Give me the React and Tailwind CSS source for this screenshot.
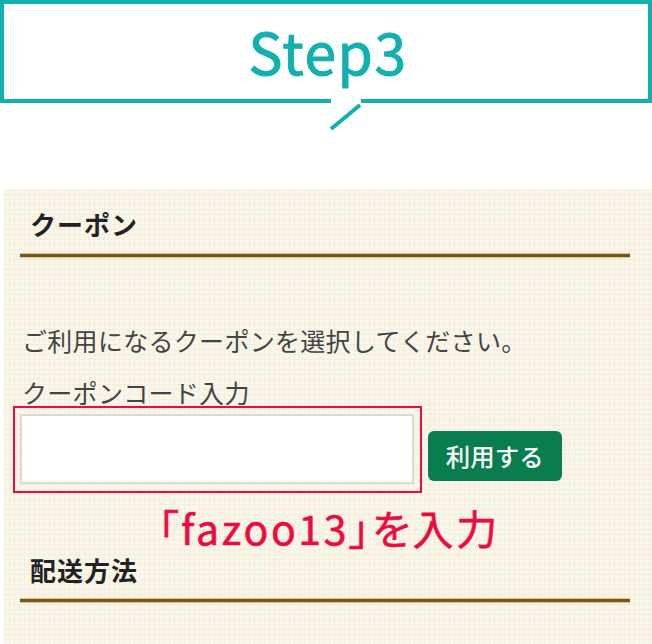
import React from 'react';

const jp = { fontFamily: '"Noto Sans CJK JP", "Noto Sans", sans-serif' };

const Rule = () => (
    <div className="ml-[7px] h-[3px] w-[610px] bg-[#77551b] shadow-[0_1px_1px_#d6c39a,0_-1px_1px_#d6c39a]" />
);

const App = () => {
    return (
        <div className="relative h-[644px] w-[652px] overflow-hidden bg-white" style={jp}>
            {/* step bubble */}
            <div className="relative flex h-[103px] items-center justify-center border-4 border-[#12b0ae]">
                <span className="ml-[4px] mt-[-2px] text-[57px] font-normal leading-none tracking-[1.5px] text-[#12b0ae] [-webkit-text-stroke:1px_#12b0ae]">
                    Step3
                </span>
                <svg
                    className="absolute left-[318px] top-[95px]"
                    width="44"
                    height="36"
                    viewBox="0 0 44 36"
                >
                    <rect x="9" y="0" width="30" height="8" fill="#fff" />
                    <line x1="38" y1="6" x2="9" y2="30" stroke="#12b0ae" strokeWidth="4" />
                </svg>
            </div>

            {/* coupon panel */}
            <div className="ml-[4px] mt-[86px] h-[455px] bg-[#faf6eb] bg-[linear-gradient(#f4eedd_1px,transparent_1px),linear-gradient(90deg,#f4eedd_1px,transparent_1px)] bg-[size:5px_5px] pl-[9px] pt-[20px]">
                <h2 className="ml-[17px] text-[26px] font-bold leading-[30px] tracking-[1px] text-[#222]">クーポン</h2>
                <div className="mt-[15px]">
                    <Rule />
                </div>

                <p className="ml-[9px] mt-[68px] text-[25px] leading-[30px] tracking-[0.3px] text-[#444]">
                    ご利用になるクーポンを選択してください。
                </p>
                <p className="ml-[9px] mt-[23px] text-[25px] leading-[28px] tracking-[0.3px] text-[#444]">
                    クーポンコード入力
                </p>

                <div className="flex items-start">
                    <div className="h-[87px] w-[409px] border-2 border-[#ec0b3f] pl-[5px] pt-[6px]">
                        <input
                            type="text"
                            className="h-[70px] w-[394px] border-2 border-[#dcdad3] bg-white outline-none"
                        />
                    </div>
                    <button className="ml-[6px] mt-[25px] flex h-[50px] w-[134px] items-center justify-center rounded-[6px] bg-[#0a7d4f] text-[24px] font-normal tracking-[0.5px] text-white [-webkit-text-stroke:0.4px_#fff]">
                        利用する
                    </button>
                </div>

                <p className="mt-[12px] pl-[145px] text-[41px] font-normal leading-[44px] tracking-[2.6px] text-[#ec0b3f] [-webkit-text-stroke:0.6px_#ec0b3f] [font-feature-settings:'palt']">
                    「fazoo13」を入力
                </p>

                <h2 className="ml-[17px] mt-[6px] text-[26px] font-bold leading-[30px] tracking-[1px] text-[#222]">配送方法</h2>
                <div className="mt-[14px]">
                    <Rule />
                </div>
            </div>
        </div>
    );
};

export default App;
